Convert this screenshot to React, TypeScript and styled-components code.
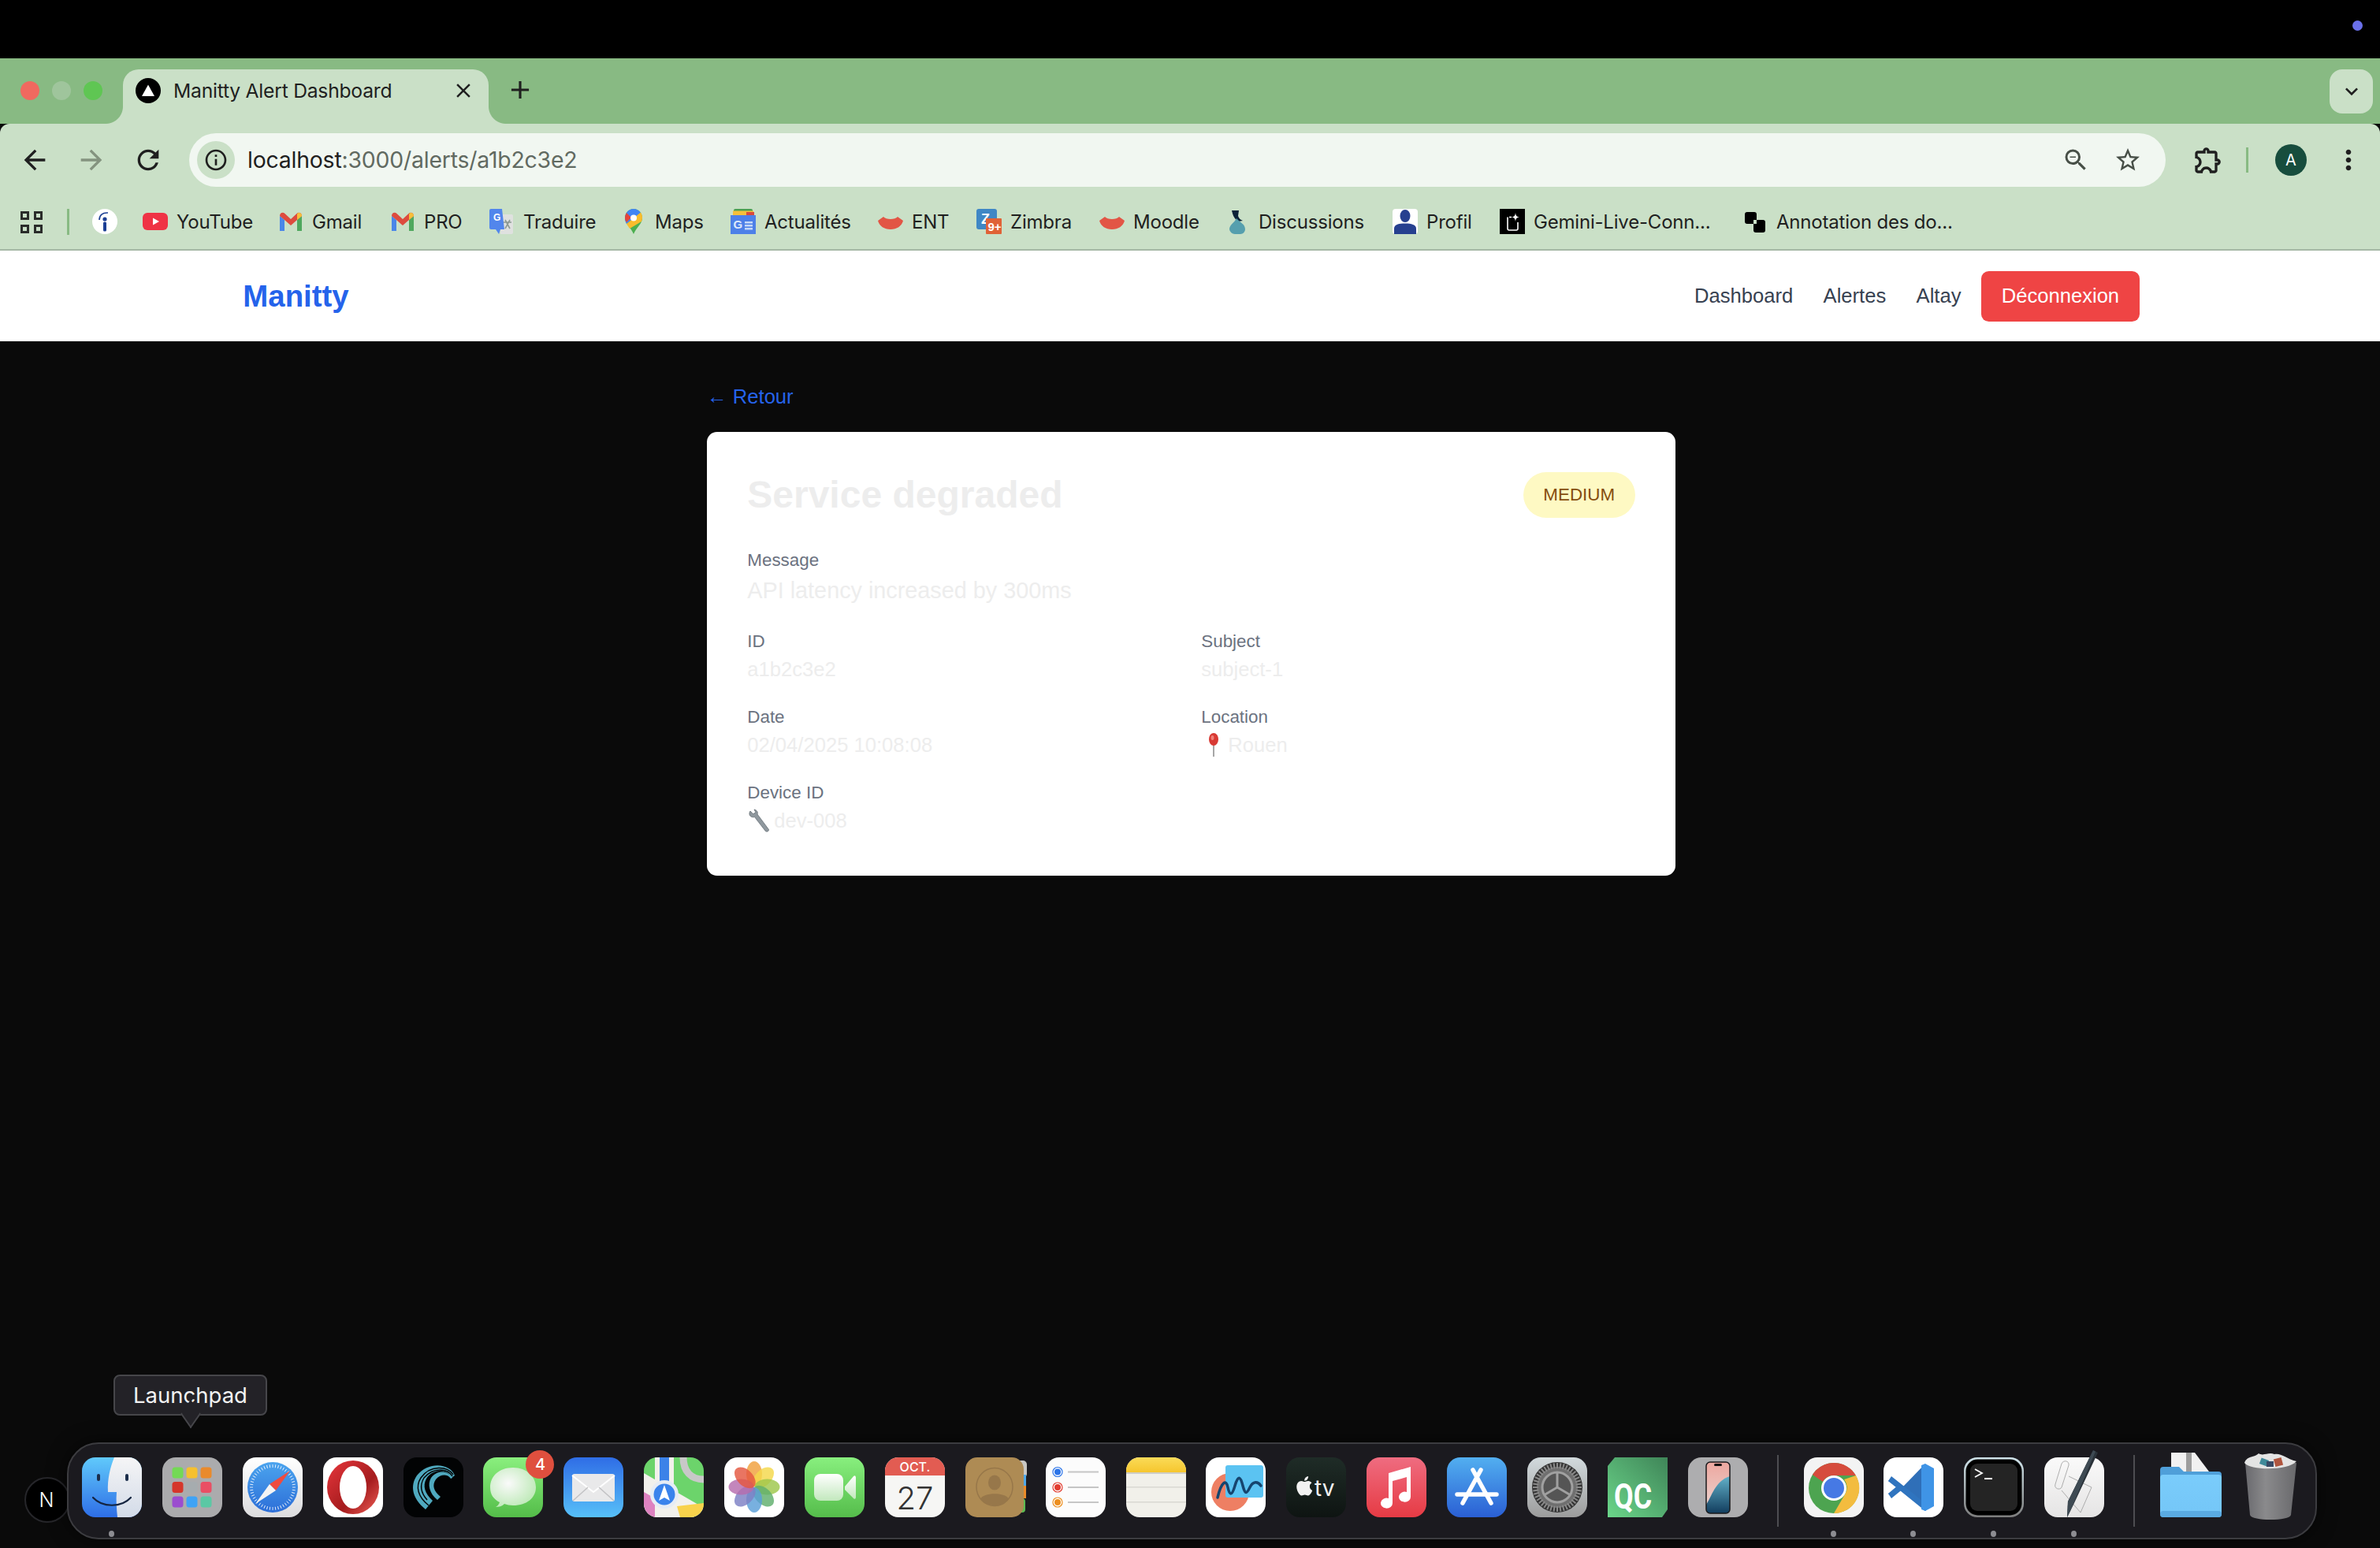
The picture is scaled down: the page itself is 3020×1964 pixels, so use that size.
import React from 'react';
import styled, { createGlobalStyle } from 'styled-components';
import { MdArrowBack, MdArrowForward, MdRefresh, MdInfoOutline, MdOutlineZoomOut, MdStarBorder, MdOutlineExtension, MdMoreVert, MdClose, MdAdd, MdKeyboardArrowDown } from 'react-icons/md';

const GlobalStyle = createGlobalStyle`
  html, body {
    margin: 0;
    padding: 0;
    background: #0a0a0a;
  }
  * { box-sizing: border-box; }
`;

const UI_FONT = `Inter, "Liberation Sans", sans-serif`;

const Screen = styled.div`
  position: relative;
  width: 3020px;
  height: 1964px;
  overflow: hidden;
  background: #0a0a0a;
  font-family: "Liberation Sans", Arial, sans-serif;
`;

const MenuBar = styled.div`
  height: 74px;
  background: #000;
  display: flex;
  justify-content: flex-end;
  align-items: flex-start;
  padding: 26px 22px 0 0;
`;

const RecordingDot = styled.span`
  width: 13px;
  height: 13px;
  border-radius: 50%;
  background: #6a70ea;
`;

const TabStrip = styled.div`
  height: 83px;
  background: #88ba83;
  display: flex;
  align-items: flex-end;
  font-family: ${UI_FONT};
`;

const TrafficLights = styled.div`
  display: flex;
  gap: 16px;
  width: 156px;
  padding: 0 0 30px 26px;
  align-self: flex-end;
`;

const Light = styled.span<{ $color: string }>`
  width: 24px;
  height: 24px;
  border-radius: 50%;
  background: ${p => p.$color};
`;

const Tab = styled.div`
  position: relative;
  width: 464px;
  height: 69px;
  background: #cae0c7;
  border-radius: 20px 20px 0 0;
  display: flex;
  align-items: flex-start;
  padding: 11px 17px 0 16px;
  color: #1f1f1f;
  &::before, &::after {
    content: '';
    position: absolute;
    bottom: 0;
    width: 22px;
    height: 22px;
  }
  &::before {
    left: -22px;
    background: radial-gradient(circle at 0 0, #88ba83 21.5px, #cae0c7 22.5px);
  }
  &::after {
    right: -22px;
    background: radial-gradient(circle at 100% 0, #88ba83 21.5px, #cae0c7 22.5px);
  }
`;

const TabFavicon = styled.span`
  width: 32px;
  height: 32px;
  flex: none;
  margin-right: 16px;
`;

const TabTitle = styled.span`
  flex: 1;
  font-size: 24.7px;
  line-height: 32px;
  letter-spacing: -0.25px;
  white-space: nowrap;
`;

const TabClose = styled.span`
  display: flex;
  align-items: center;
  height: 32px;
  font-size: 30px;
  color: #1f1f1f;
`;

const NewTab = styled.span`
  display: flex;
  margin: 0 0 24px 21px;
  font-size: 38px;
  color: #1f1f1f;
`;

const StripSpacer = styled.div`
  flex: 1;
`;

const TabListButton = styled.span`
  width: 55px;
  height: 56px;
  margin: 0 9px 13px 0;
  background: #cae0c7;
  border-radius: 16px;
  display: flex;
  align-items: center;
  justify-content: center;
  font-size: 32px;
  color: #1f1f1f;
`;

const ChromeBar = styled.div`
  background: #cae0c7;
  border-radius: 12px 12px 0 0;
  border-bottom: 2px solid #a5b8a5;
  height: 161px;
  font-family: ${UI_FONT};
`;

const Toolbar = styled.div`
  height: 92px;
  display: flex;
  align-items: flex-start;
  padding-top: 12px;
`;

const ToolButton = styled.span<{ $dim?: boolean }>`
  width: 72px;
  height: 68px;
  flex: none;
  display: flex;
  align-items: center;
  justify-content: center;
  font-size: 40px;
  color: ${p => (p.$dim ? '#84937f' : '#1f1f1f')};
`;

const NavButtons = styled.div`
  display: flex;
  width: 240px;
  padding-left: 8px;
`;

const AddressBar = styled.div`
  flex: none;
  width: 2508px;
  height: 68px;
  border-radius: 34px;
  background: #f1f7f1;
  display: flex;
  align-items: center;
  padding: 0 30px 1px 10px;
`;

const SiteInfo = styled.span`
  width: 48px;
  height: 48px;
  border-radius: 50%;
  background: #cae0c7;
  color: #1f1f1f;
  display: flex;
  align-items: center;
  justify-content: center;
  font-size: 32px;
  margin-right: 16px;
`;

const UrlHost = styled.span`
  font-size: 28.4px;
  color: #1f1f1f;
  letter-spacing: -0.2px;
`;

const UrlPath = styled(UrlHost)`
  color: #616a61;
`;

const AddressEnd = styled.div`
  margin-left: auto;
  display: flex;
  gap: 30px;
  font-size: 36px;
  color: #474f47;
`;

const ToolbarEnd = styled.div`
  display: flex;
  align-items: center;
  height: 68px;
  padding-left: 34px;
  font-size: 40px;
  color: #1f1f1f;
`;

const ToolbarRule = styled.span`
  width: 3px;
  height: 32px;
  margin: 0 34px 0 28px;
  background: #88ba83;
`;

const Avatar = styled.span`
  width: 40px;
  height: 40px;
  border-radius: 50%;
  background: #174d3d;
  color: #fff;
  font-size: 20px;
  display: flex;
  align-items: center;
  justify-content: center;
  margin-right: 33px;
`;

const BookmarkRow = styled.div`
  height: 67px;
  display: flex;
  align-items: flex-start;
  padding: 16px 0 0 26px;
`;

const AppsGrid = styled.span`
  width: 28px;
  height: 28px;
  flex: none;
  margin: 3px 31px 0 0;
  display: grid;
  grid-template-columns: 1fr 1fr;
  gap: 6px;
`;

const AppsCell = styled.span`
  border: 3px solid #2a2c2a;
`;

const BookmarkRule = styled.span`
  width: 3px;
  height: 33px;
  flex: none;
  background: #88ba83;
  margin-right: 29px;
`;

const AppsBookmark = styled.span`
  width: 32px;
  height: 32px;
  flex: none;
  margin-right: 32px;
`;

const Bookmark = styled.div<{ $width: number }>`
  width: ${p => p.$width}px;
  flex: none;
  display: flex;
  align-items: center;
  gap: 11px;
  height: 32px;
  color: #1f1f1f;
  font-size: 24px;
  letter-spacing: -0.2px;
  white-space: nowrap;
`;

const BookmarkIcon = styled.span`
  width: 32px;
  height: 32px;
  flex: none;
  svg { display: block; }
`;

const SiteNav = styled.nav`
  height: 115px;
  padding-left: 3px;
  background: #fff;
`;

const SiteNavInner = styled.div`
  width: 2457.6px;
  height: 100%;
  margin: 0 auto;
  padding: 0 25.6px;
  display: flex;
  align-items: center;
  justify-content: space-between;
`;

const Logo = styled.span`
  font-size: 38.4px;
  font-weight: 700;
  color: #2563eb;
`;

const NavLinks = styled.div`
  display: flex;
  align-items: center;
  gap: 38.4px;
  font-size: 25.6px;
  color: #374151;
`;

const NavUser = styled.div`
  display: flex;
  align-items: center;
  gap: 25.6px;
`;

const LogoutButton = styled.button`
  height: 64px;
  padding: 0 25.6px;
  border: none;
  border-radius: 9.6px;
  background: #ef4444;
  color: #fff;
  font-family: inherit;
  font-size: 25.6px;
`;

const Page = styled.div`
  padding-left: 3px;
`;

const Main = styled.main`
  width: 1228.8px;
  margin: 0 auto;
  padding-top: 51px;
`;

const BackLink = styled.a`
  display: block;
  font-size: 25.6px;
  line-height: 38.4px;
  margin-bottom: 25.6px;
  color: #2563eb;
`;

const Card = styled.section`
  background: #fff;
  border-radius: 12.8px;
  padding: 51.2px;
`;

const CardHeader = styled.div`
  display: flex;
  justify-content: space-between;
  align-items: center;
  margin-bottom: 38.4px;
`;

const AlertTitle = styled.h1`
  margin: 0;
  font-size: 48px;
  line-height: 57.6px;
  font-weight: 700;
  color: #ededed;
`;

const SeverityBadge = styled.span`
  padding: 12.8px 25.6px;
  border-radius: 999px;
  background: #fef9c3;
  color: #854d0e;
  font-size: 22.4px;
  line-height: 32px;
`;

const FieldLabel = styled.div`
  font-size: 22.4px;
  line-height: 32px;
  color: #6b7280;
`;

const MessageText = styled.div`
  font-size: 28.8px;
  line-height: 44.8px;
  margin-bottom: 25.6px;
  color: #ededed;
`;

const FieldGrid = styled.div`
  display: grid;
  grid-template-columns: 1fr 1fr;
  gap: 25.6px;
`;

const FieldValue = styled.div`
  display: flex;
  align-items: center;
  font-size: 25.6px;
  line-height: 38.4px;
  color: #ededed;
`;

const EmojiMark = styled.span`
  display: flex;
  width: 34px;
  flex: none;
`;

const Dock = styled.div`
  position: absolute;
  left: 85px;
  top: 1830px;
  width: 2855px;
  height: 123px;
  background: #1b1a1f;
  border: 2px solid #3c3c40;
  border-radius: 40px;
  display: flex;
  gap: 25.9px;
  padding: 17px 0 0 17px;
  box-shadow: 0 0 24px rgba(0, 0, 0, 0.6);
`;

const DockSlot = styled.div<{ $width?: number }>`
  position: relative;
  width: ${p => p.$width ?? 76}px;
  height: 76px;
  flex: none;
  svg { display: block; overflow: visible; }
`;

const RunningDot = styled.span`
  position: absolute;
  left: 50%;
  top: 93px;
  width: 7px;
  height: 8px;
  margin-left: -4px;
  border-radius: 50%;
  background: #8d8d92;
`;

const NotificationBadge = styled.span`
  position: absolute;
  right: -14px;
  top: -9px;
  width: 36px;
  height: 36px;
  border-radius: 50%;
  background: #df4f3e;
  color: #fff;
  font: 500 20px ${UI_FONT};
  display: flex;
  align-items: center;
  justify-content: center;
`;

const DockRule = styled.span`
  width: 2px;
  height: 91px;
  margin: -3px 6px 0 11px;
  flex: none;
  background: #4d4d51;
`;

const DevIndicator = styled.div`
  position: absolute;
  left: 31px;
  top: 1874px;
  width: 58px;
  height: 58px;
  border-radius: 50%;
  background: #000;
  border: 2px solid #26262a;
  color: #fff;
  display: flex;
  align-items: center;
  justify-content: center;
  padding-right: 2px;
  font: 300 25px ${UI_FONT};
`;

const DockTooltip = styled.div`
  position: absolute;
  left: 144px;
  top: 1744px;
  width: 195px;
  height: 52px;
  background: #232227;
  border: 2px solid #46464a;
  border-radius: 8px;
  color: #f2f2f2;
  font: 400 27.5px ${UI_FONT};
  display: flex;
  align-items: center;
  justify-content: center;
  &::after {
    content: '';
    position: absolute;
    left: 85px;
    bottom: -11px;
    width: 20px;
    height: 20px;
    background: #232227;
    border-right: 2px solid #46464a;
    border-bottom: 2px solid #46464a;
    transform: rotate(45deg) skew(10deg, 10deg);
  }
`;

/* tab + bookmark favicons */

const NextFavicon = () => (
  <svg viewBox="0 0 32 32" width="32" height="32">
    <circle cx="16" cy="16" r="16" fill="#000" />
    <path d="M16 8.5 24 23H8z" fill="#fff" />
  </svg>
);

const InfoFav = () => (
  <svg viewBox="0 0 32 32" width="32" height="32">
    <circle cx="16" cy="16" r="16" fill="#fff" />
    <circle cx="16" cy="13" r="2.6" fill="#1c3f94" />
    <rect x="14" y="16.5" width="4" height="12" rx="1.5" fill="#1c3f94" />
    <path d="M9 14C9 8 13 4.500 20 5" fill="none" stroke="#1c3f94" strokeWidth="1.6" />
  </svg>
);

const YouTubeFav = () => (
  <svg viewBox="0 0 32 32" width="32" height="32">
    <rect x="0" y="5" width="32" height="22" rx="6" fill="#ef3345" />
    <path d="M13 11.500 21 16 13 20.500z" fill="#fff" />
  </svg>
);

const GmailFav = () => (
  <svg viewBox="0 0 32 32" width="32" height="32">
    <path d="M2 9V28h6V14z" fill="#4a86e8" />
    <path d="M24 14V28h6V9z" fill="#4fa85e" />
    <path d="M2 9C2 5 6 3.500 8.500 6L16 13 23.500 6C26 3.500 30 5 30 9L24 14 16 21 8 14z" fill="#dd4b3e" />
    <path d="M24 6.500C26 3.800 30 5 30 9L24 14z" fill="#f6bf3a" />
  </svg>
);

const TranslateFav = () => (
  <svg viewBox="0 0 32 32" width="32" height="32">
    <path d="M14 7H28a2 2 0 0 1 2 2V30a2 2 0 0 1-2 2H14z" fill="#dfe1df" />
    <path d="M20 14l6 11M26 14l-6 11M18 17h10" stroke="#8d9a94" strokeWidth="1.6" fill="none" />
    <path d="M2 0H16l3 26H14l-2 6-4-6H2a2 2 0 0 1-2-2V2a2 2 0 0 1 2-2z" fill="#5286ec" />
    <text x="5" y="15" fontSize="12" fontWeight="700" fill="#fff" fontFamily="Liberation Sans">G</text>
  </svg>
);

const MapsFav = () => (
  <svg viewBox="0 0 32 32" width="32" height="32">
    <path d="M16 32C13 24 5 19 5 11.500 5 5 10 0 16 0s11 5 11 11.500C27 19 19 24 16 32z" fill="#4caf50" />
    <path d="M7 5A11 11 0 0 1 16 0c4 0 7 2 9 5L7 19C5.800 17 5 14.500 5 11.500 5 9 6 7 7 5z" fill="#4285f4" />
    <path d="M25 4.500A11 11 0 0 1 27 11.500C27 13 26.500 14.500 26 16L11 25 7 19z" fill="#f9bc2d" />
    <path d="M7 5 13 11 7 17C5.500 15 5 13 5 11.500 5 9 6 7 7 5z" fill="#e5443a" />
    <circle cx="16" cy="11.500" r="4" fill="#fff" />
  </svg>
);

const NewsFav = () => (
  <svg viewBox="0 0 32 32" width="32" height="32">
    <rect x="4" y="0" width="24" height="12" rx="2" fill="#4c9f50" />
    <rect x="3" y="2.500" width="26" height="10" fill="#f6bf3a" />
    <rect x="20" y="4" width="10" height="8" fill="#d9493c" />
    <rect x="0" y="8" width="32" height="24" fill="#4d80e8" />
    <text x="3.500" y="25" fontSize="15" fontWeight="700" fill="#dfe9fb" fontFamily="Liberation Sans">G</text>
    <path d="M18 16h10v2.400H18zM18 20h10v2.400H18zM18 24h10v2.400H18z" fill="#c6d8f8" />
  </svg>
);

const MoodleFav = () => (
  <svg viewBox="0 0 32 32" width="32" height="32">
    <path d="M0 15 7 10C10 14 22 14 25 10L32 15C30 22 24 26 16 26 8 26 2 22 0 15z" fill="#e25545" />
  </svg>
);

const ZimbraFav = () => (
  <svg viewBox="0 0 32 32" width="32" height="32">
    <rect x="0" y="0" width="26" height="26" rx="3" fill="#3f87c5" />
    <text x="6" y="19" fontSize="18" fontWeight="700" fill="#fff" fontFamily="Liberation Sans">Z</text>
    <rect x="12" y="12" width="20" height="20" rx="1" fill="#e06236" />
    <text x="14.500" y="28" fontSize="15" fontWeight="700" fill="#fff" fontFamily="Liberation Sans">9+</text>
  </svg>
);

const FlaskFav = () => (
  <svg viewBox="0 0 32 32" width="32" height="32">
    <path d="M9 2h9l-1 7c1 3 3 5 6 6l-6 1c-3-2-6-6-7-10z" fill="#0c2238" />
    <path d="M15 12C20 18 26 19 26 26a6 6 0 0 1-6 6h-7a7 7 0 0 1-7-6c0-6 6-8 9-14z" fill="#569fae" />
  </svg>
);

const ProfilFav = () => (
  <svg viewBox="0 0 32 32" width="32" height="32">
    <rect width="32" height="32" rx="4" fill="#fff" />
    <ellipse cx="16" cy="9" rx="6.500" ry="8" fill="#26408f" />
    <path d="M2 32V25C2 20 8 18.500 16 18.500S30 20 30 25V32z" fill="#26408f" />
  </svg>
);

const GeminiFav = () => (
  <svg viewBox="0 0 32 32" width="32" height="32">
    <rect width="32" height="32" fill="#000" />
    <path d="M10 10.500V25a2 2 0 0 0 2 2h9a2 2 0 0 0 2-2V17M15 10.500h-3" fill="none" stroke="#fff" strokeWidth="1.600" />
    <path d="M20 5c.5 4 1.500 5 5 5.500-3.500.5-4.500 1.500-5 5.500-.5-4-1.500-5-5-5.500 3.500-.5 4.500-1.500 5-5.500z" fill="#fff" />
  </svg>
);

const AnnotationFav = () => (
  <svg viewBox="0 0 32 32" width="32" height="32">
    <rect x="3" y="4" width="15" height="15" rx="3" fill="#000" />
    <rect x="14" y="14" width="15" height="16" rx="3" fill="#000" />
    <rect x="14" y="14" width="4" height="5" fill="#cae0c7" />
  </svg>
);

/* dock icons, 76x76 */

const FinderIcon = () => (
  <svg viewBox="0 0 76 76" width="76" height="76">
    <defs>
      <linearGradient id="fi1" x1="0" y1="0" x2="0" y2="1"><stop offset="0" stopColor="#60c9fb" /><stop offset="1" stopColor="#2e6ee6" /></linearGradient>
      <linearGradient id="fi2" x1="0" y1="0" x2="0" y2="1"><stop offset="0" stopColor="#f5f5f6" /><stop offset="1" stopColor="#d3dbe8" /></linearGradient>
    </defs>
    <rect width="76" height="76" rx="17" fill="url(#fi1)" />
    <path d="M41 0H59A17 17 0 0 1 76 17V59A17 17 0 0 1 59 76H45C44 66 43 54 44 44H33C32 28 36 12 41 0z" fill="url(#fi2)" />
    <rect x="19" y="21" width="4" height="9" rx="2" fill="#1b2d4b" />
    <rect x="55" y="21" width="4" height="9" rx="2" fill="#1b2d4b" />
    <path d="M14 51C26 64 50 64 62 51" fill="none" stroke="#14243f" strokeWidth="2.200" strokeLinecap="round" />
  </svg>
);

const LaunchpadIcon = () => {
  const tiles = ['#74d955', '#f6c02f', '#e98a2c', '#d5362b', '#a6acaf', '#e94f64', '#9b4dcf', '#3fa3f6', '#5bc8a4'];
  return (
    <svg viewBox="0 0 76 76" width="76" height="76">
      <rect width="76" height="76" rx="17" fill="#ababad" />
      {tiles.map((c, i) => (
        <rect key={c} x={12.500 + (i % 3) * 18} y={12.500 + Math.floor(i / 3) * 18.500} width="14" height="14" rx="3.500" fill={c} />
      ))}
    </svg>
  );
};

const SafariIcon = () => {
  const ticks = Array.from({ length: 48 }, (_, i) => i * 7.5);
  return (
    <svg viewBox="0 0 76 76" width="76" height="76">
      <defs>
        <linearGradient id="sa1" x1="0" y1="0" x2="0" y2="1"><stop offset="0" stopColor="#ffffff" /><stop offset="1" stopColor="#dcdcde" /></linearGradient>
        <linearGradient id="sa2" x1="0" y1="0" x2="0" y2="1"><stop offset="0" stopColor="#4ba4ee" /><stop offset="1" stopColor="#2d6fd8" /></linearGradient>
      </defs>
      <rect width="76" height="76" rx="17" fill="url(#sa1)" />
      <circle cx="38" cy="38" r="32" fill="url(#sa2)" />
      {ticks.map(a => (
        <line key={a} x1="38" y1="9" x2="38" y2="13" stroke="#fff" strokeWidth="0.800" transform={`rotate(${a} 38 38)`} />
      ))}
      <path d="M60 17 34 34 42 42z" fill="#ef4b3f" />
      <path d="M16 59 34 34 42 42z" fill="#f4f4f4" />
    </svg>
  );
};

const OperaIcon = () => (
  <svg viewBox="0 0 76 76" width="76" height="76">
    <defs>
      <linearGradient id="op1" x1="0" y1="0" x2="1" y2="1"><stop offset="0" stopColor="#e8363c" /><stop offset="0.600" stopColor="#a51c1e" /><stop offset="1" stopColor="#ef5f57" /></linearGradient>
    </defs>
    <rect width="76" height="76" rx="17" fill="#fff" />
    <ellipse cx="38" cy="38" rx="33" ry="34" fill="url(#op1)" />
    <ellipse cx="38" cy="38" rx="17" ry="27" fill="#fff" />
  </svg>
);

const WaveIcon = () => (
  <svg viewBox="0 0 76 76" width="76" height="76">
    <rect width="76" height="76" rx="17" fill="#020304" />
    <path d="M65 23C60 8 32 4 17 23 8 36 11 52 28 66L37 55C27 46 24 36 29 27 38 14 55 14 61 26z" fill="#4fa9bf" />
    <path d="M47 50C38 43 36 35 41 28 47 21 56 21 60 27L62 26C56 16 42 16 35 26 30 34 33 46 43 54z" fill="#4fa9bf" />
    <g fill="none" stroke="#020304" strokeWidth="1.400">
      <path d="M63 22C56 11 34 9 22 26 15 37 18 50 32 61" />
      <path d="M62 24C56 14 38 12 26 26 20 36 22 45 30 54" />
    </g>
  </svg>
);

const MessagesIcon = () => (
  <svg viewBox="0 0 76 76" width="76" height="76">
    <defs>
      <linearGradient id="ms1" x1="0" y1="0" x2="0" y2="1"><stop offset="0" stopColor="#8aef7e" /><stop offset="1" stopColor="#54bd49" /></linearGradient>
      <radialGradient id="ms2" cx="0.4" cy="0.4" r="0.7"><stop offset="0" stopColor="#fafafa" /><stop offset="1" stopColor="#b9e8b2" /></radialGradient>
    </defs>
    <rect width="76" height="76" rx="17" fill="url(#ms1)" />
    <path d="M38 13C20 13 9 24 9 38c0 9 4 15 12 19-1 3-3 5-5 6 4 0 8-1 11-4 3 1 7 2 11 2 18 0 29-10 29-23S56 13 38 13z" fill="url(#ms2)" />
  </svg>
);

const MailIcon = () => (
  <svg viewBox="0 0 76 76" width="76" height="76">
    <defs>
      <linearGradient id="ml1" x1="0" y1="0" x2="0" y2="1"><stop offset="0" stopColor="#2f6de6" /><stop offset="1" stopColor="#57c0f8" /></linearGradient>
    </defs>
    <rect width="76" height="76" rx="17" fill="url(#ml1)" />
    <rect x="11" y="21" width="54" height="35" rx="3" fill="#e9e9ea" />
    <path d="M11 23 38 44 65 23" fill="none" stroke="#fff" strokeWidth="2" />
    <path d="M12 55 31 38M64 55 45 38" stroke="#c2c2c4" strokeWidth="1.500" />
  </svg>
);

const MapsIcon = () => (
  <svg viewBox="0 0 76 76" width="76" height="76">
    <defs><clipPath id="mp0"><rect width="76" height="76" rx="17" /></clipPath></defs>
    <g clipPath="url(#mp0)">
      <rect width="76" height="76" fill="#6cd46b" />
      <path d="M0 20 76 64V76H0z" fill="#f2f1ec" />
      <path d="M0 44V76H18V54z" fill="#dd82c0" />
      <path d="M42 62 76 58V76H46z" fill="#f8d24c" />
      <rect x="14" y="0" width="24" height="76" fill="#f2f1ec" />
      <rect x="20" y="0" width="12" height="45" fill="#3c82e8" />
      <path d="M50 0C50 18 60 28 76 28" fill="none" stroke="#c8c8c8" strokeWidth="9" />
      <circle cx="26" cy="47" r="18" fill="#e6ecf5" />
      <circle cx="26" cy="47" r="13.500" fill="#3a83ec" />
      <path d="M26 35 33 55 26 51 19 55z" fill="#fff" />
    </g>
  </svg>
);

const PhotosIcon = () => {
  const petals = ['#f0a03c', '#f4d84a', '#9ec74a', '#5fae6d', '#5a9fd8', '#7d80c4', '#b66bad', '#e4573f'];
  return (
    <svg viewBox="0 0 76 76" width="76" height="76">
      <rect width="76" height="76" rx="17" fill="#fff" />
      {petals.map((c, i) => (
        <ellipse key={c} cx="38" cy="21" rx="10" ry="16" fill={c} fillOpacity="0.82" transform={`rotate(${i * 45} 38 37.500)`} />
      ))}
    </svg>
  );
};

const FaceTimeIcon = () => (
  <svg viewBox="0 0 76 76" width="76" height="76">
    <defs>
      <linearGradient id="ft1" x1="0" y1="0" x2="0" y2="1"><stop offset="0" stopColor="#88ef7e" /><stop offset="1" stopColor="#55bd4b" /></linearGradient>
      <linearGradient id="ft2" x1="0" y1="0" x2="0" y2="1"><stop offset="0" stopColor="#ffffff" /><stop offset="1" stopColor="#c2e8bd" /></linearGradient>
    </defs>
    <rect width="76" height="76" rx="17" fill="url(#ft1)" />
    <rect x="12" y="21" width="37" height="34" rx="8" fill="url(#ft2)" />
    <path d="M51 37 62 24C64 22 65 24 65 26V50C65 52 64 54 62 52L51 41z" fill="url(#ft2)" />
  </svg>
);

const CalendarIcon = () => (
  <svg viewBox="0 0 76 76" width="76" height="76">
    <defs><clipPath id="cl0"><rect width="76" height="76" rx="17" /></clipPath></defs>
    <g clipPath="url(#cl0)">
      <rect width="76" height="76" fill="#f6f6f4" />
      <rect width="76" height="23" fill="#e25c52" />
    </g>
    <text x="38" y="18" textAnchor="middle" fontSize="16" fontWeight="500" fill="#fff" fontFamily="Inter">OCT.</text>
    <text x="38" y="66" textAnchor="middle" fontSize="40" fill="#333" fontFamily="Inter" fontWeight="300">27</text>
  </svg>
);

const ContactsIcon = () => (
  <svg viewBox="0 0 78 76" width="78" height="76">
    <rect x="60" y="4" width="18" height="22" rx="5" fill="#c9c7c3" />
    <rect x="68" y="22" width="9" height="14" fill="#4fa8e8" />
    <rect x="68" y="36" width="9" height="16" fill="#ea8c2a" />
    <rect x="66" y="52" width="10" height="18" rx="4" fill="#5cbb52" />
    <rect width="74" height="76" rx="15" fill="#ae8b54" />
    <ellipse cx="37" cy="37.500" rx="23" ry="24" fill="none" stroke="#97774a" strokeWidth="1.500" />
    <ellipse cx="37" cy="32" rx="8" ry="9.500" fill="#97774a" />
    <path d="M19 53C22 44 52 44 55 53 50 59 44 61 37 61S24 59 19 53z" fill="#97774a" />
  </svg>
);

const RemindersIcon = () => (
  <svg viewBox="0 0 76 76" width="76" height="76">
    <rect width="76" height="76" rx="17" fill="#fcfcfc" />
    {[['#2d75e8', 18.500], ['#e23d31', 38], ['#ec8f20', 57]].map(([c, y]) => (
      <g key={c as string}>
        <circle cx="15" cy={y as number} r="6" fill="#fff" stroke={c as string} strokeWidth="1.200" />
        <circle cx="15" cy={y as number} r="4" fill={c as string} />
        <rect x="28" y={(y as number) - 1} width="39" height="2" fill="#c6c6c6" />
      </g>
    ))}
  </svg>
);

const NotesIcon = () => (
  <svg viewBox="0 0 76 76" width="76" height="76">
    <defs>
      <clipPath id="nt0"><rect width="76" height="76" rx="17" /></clipPath>
      <linearGradient id="nt1" x1="0" y1="0" x2="0" y2="1"><stop offset="0" stopColor="#fadb58" /><stop offset="1" stopColor="#f6c62e" /></linearGradient>
    </defs>
    <g clipPath="url(#nt0)">
      <rect width="76" height="76" fill="#f1f0ea" />
      <rect width="76" height="19" fill="url(#nt1)" />
      <rect y="19" width="76" height="2" fill="#cfcdc6" />
      <rect y="37" width="76" height="1.500" fill="#d9d8d2" />
      <rect y="56" width="76" height="1.500" fill="#d9d8d2" />
    </g>
  </svg>
);

const FreeformIcon = () => (
  <svg viewBox="0 0 76 76" width="76" height="76">
    <rect width="76" height="76" rx="17" fill="#fff" />
    <circle cx="31" cy="44" r="24" fill="#ee7f63" />
    <rect x="25" y="10" width="48" height="41" rx="3" fill="#5bc3f2" />
    <path d="M15 51C20 30 26 28 28 38S33 50 37 36 44 24 47 36 52 46 56 38 66 30 70 36" fill="none" stroke="#16456f" strokeWidth="3.500" strokeLinecap="round" />
  </svg>
);

const TvIcon = () => (
  <svg viewBox="0 0 76 76" width="76" height="76">
    <defs>
      <linearGradient id="tv1" x1="0" y1="0" x2="0" y2="1"><stop offset="0" stopColor="#1f2c27" /><stop offset="1" stopColor="#0e1412" /></linearGradient>
    </defs>
    <rect width="76" height="76" rx="17" fill="url(#tv1)" />
    <path transform="translate(11 24) scale(1.020)" fill="#f2f2f2" d="M12.152 6.896c-.948 0-2.415-1.078-3.96-1.04-2.04.027-3.91 1.183-4.961 3.014-2.117 3.675-.546 9.103 1.519 12.09 1.013 1.454 2.208 3.09 3.792 3.039 1.52-.065 2.09-.987 3.935-.987 1.831 0 2.35.987 3.96.948 1.637-.026 2.676-1.48 3.676-2.948 1.156-1.688 1.636-3.325 1.662-3.415-.039-.013-3.182-1.221-3.22-4.857-.026-3.04 2.48-4.494 2.597-4.559-1.429-2.09-3.623-2.324-4.39-2.376-2-.156-3.675 1.09-4.61 1.09zM15.53 3.83c.843-1.012 1.4-2.427 1.245-3.83-1.207.052-2.662.805-3.532 1.818-.78.896-1.454 2.338-1.273 3.714 1.338.104 2.715-.688 3.559-1.701" />
    <text x="36" y="49" fontSize="28" fill="#f2f2f2" fontFamily="Inter" fontWeight="400">tv</text>
  </svg>
);

const MusicIcon = () => (
  <svg viewBox="0 0 76 76" width="76" height="76">
    <defs>
      <linearGradient id="mu1" x1="0" y1="0" x2="0" y2="1"><stop offset="0" stopColor="#ef6c80" /><stop offset="1" stopColor="#e63b44" /></linearGradient>
    </defs>
    <rect width="76" height="76" rx="17" fill="url(#mu1)" />
    <path d="M28 20 56 12V50a7.500 6.500 0 1 1-5-6V25L33 30V58a7.500 6.500 0 1 1-5-6z" fill="#fff" />
  </svg>
);

const AppStoreIcon = () => (
  <svg viewBox="0 0 76 76" width="76" height="76">
    <defs>
      <linearGradient id="as1" x1="0" y1="0" x2="0" y2="1"><stop offset="0" stopColor="#52aff0" /><stop offset="1" stopColor="#2a5fd4" /></linearGradient>
    </defs>
    <rect width="76" height="76" rx="17" fill="url(#as1)" />
    <g stroke="#fff" strokeWidth="5.500" strokeLinecap="round" fill="none">
      <path d="M33 16 56 58" />
      <path d="M43 16 20 58" />
      <path d="M13 47H63" />
    </g>
  </svg>
);

const SettingsIcon = () => {
  const teeth = Array.from({ length: 44 }, (_, i) => i * (360 / 44));
  return (
    <svg viewBox="0 0 76 76" width="76" height="76">
      <defs>
        <linearGradient id="st1" x1="0" y1="0" x2="0" y2="1"><stop offset="0" stopColor="#d2dadd" /><stop offset="1" stopColor="#9c9c9c" /></linearGradient>
      </defs>
      <rect width="76" height="76" rx="17" fill="url(#st1)" />
      <circle cx="38" cy="38" r="32" fill="#333" />
      <circle cx="38" cy="38" r="26" fill="#6f6f6f" />
      {teeth.map(a => (
        <rect key={a} x="37" y="7" width="2" height="7" fill="#8a8a8a" transform={`rotate(${a} 38 38)`} />
      ))}
      <circle cx="38" cy="38" r="20" fill="#555" />
      <g stroke="#a0a0a0" strokeWidth="3">
        <path d="M38 38 38 18M38 38 55 48M38 38 21 48" />
        <circle cx="38" cy="38" r="19" fill="none" />
      </g>
    </svg>
  );
};

const QtIcon = () => (
  <svg viewBox="0 0 76 76" width="76" height="76">
    <defs>
      <linearGradient id="qc1" x1="0" y1="1" x2="1" y2="0"><stop offset="0" stopColor="#6bd68a" /><stop offset="1" stopColor="#3f8558" /></linearGradient>
    </defs>
    <path d="M9 0H76V66L69 76H0V11z" fill="url(#qc1)" />
    <text x="8" y="65" fontSize="45" fontWeight="700" fill="#fff" fontFamily="Roboto" textLength="48" lengthAdjust="spacingAndGlyphs">QC</text>
  </svg>
);

const IphoneIcon = () => (
  <svg viewBox="0 0 76 76" width="76" height="76">
    <defs>
      <clipPath id="ip0"><rect x="23" y="6" width="30" height="65" rx="5" /></clipPath>
      <linearGradient id="ip1" x1="0" y1="0" x2="0" y2="1"><stop offset="0" stopColor="#eda79f" /><stop offset="1" stopColor="#ebd8d4" /></linearGradient>
      <linearGradient id="ip2" x1="0" y1="0" x2="0" y2="1"><stop offset="0" stopColor="#62b1c9" /><stop offset="1" stopColor="#123d5e" /></linearGradient>
    </defs>
    <rect width="76" height="76" rx="17" fill="#adadaf" />
    <g clipPath="url(#ip0)">
      <rect x="23" y="6" width="30" height="65" fill="url(#ip1)" />
      <path d="M23 71V60C30 50 34 30 53 24V71z" fill="url(#ip2)" />
    </g>
    <rect x="23" y="6" width="30" height="65" rx="5" fill="none" stroke="#1a1a1d" strokeWidth="1.500" />
    <rect x="33" y="8" width="10" height="3" rx="1.500" fill="#111" />
  </svg>
);

const ChromeIcon = () => (
  <svg viewBox="0 0 76 76" width="76" height="76">
    <rect width="76" height="76" rx="17" fill="#f3f3f3" />
    <circle cx="38" cy="39" r="32" fill="#4da450" />
    <path d="M38 7A32 32 0 0 1 66 23H38A16 16 0 0 0 24 31L11 22A32 32 0 0 1 38 7z" fill="#d64c3d" />
    <path d="M66 23A32 32 0 0 1 38 71L52 47A16 16 0 0 0 51 28z" fill="#f3bc3f" />
    <circle cx="38" cy="39" r="16" fill="#fff" />
    <circle cx="38" cy="39" r="13" fill="#4679e4" />
  </svg>
);

const VsCodeIcon = () => (
  <svg viewBox="0 0 76 76" width="76" height="76">
    <rect width="76" height="76" rx="17" fill="#fff" />
    <path d="M53 8 24 38 9 27l-3 3 12 8-12 8 3 3 15-11 29 30z" fill="#2f6fb8" />
    <path d="M10 24 58 62 53 68 6 30zM6 46l14-12 6 5-16 13z" fill="#2f74bf" />
    <path d="M48 10 53 8 64 14V62L53 68 48 66z" fill="#3f94e6" />
  </svg>
);

const TerminalIcon = () => (
  <svg viewBox="0 0 76 76" width="76" height="76">
    <defs>
      <linearGradient id="tm1" x1="0" y1="0" x2="0" y2="1"><stop offset="0" stopColor="#cfe3ea" /><stop offset="1" stopColor="#7d7d7d" /></linearGradient>
    </defs>
    <rect width="76" height="76" rx="17" fill="url(#tm1)" />
    <rect x="2.500" y="2.500" width="71" height="71" rx="15" fill="#000" />
    <rect x="8" y="8" width="60" height="60" rx="9" fill="#242424" />
    <path d="M14 15 23 20 14 25" fill="none" stroke="#fff" strokeWidth="1.800" />
    <rect x="26" y="26" width="10" height="2" fill="#fff" />
  </svg>
);

const ScriptEditorIcon = () => (
  <svg viewBox="0 0 76 76" width="76" height="76">
    <defs>
      <linearGradient id="se1" x1="0" y1="0" x2="0" y2="1"><stop offset="0" stopColor="#fafafa" /><stop offset="1" stopColor="#e5e4e4" /></linearGradient>
    </defs>
    <rect width="76" height="76" rx="17" fill="url(#se1)" />
    <path d="M22 8 14 34C12 40 20 42 22 38L31 10C32 4 24 3 22 8zM31 24 60 38 46 70 22 42" fill="none" stroke="#a5a5a5" strokeWidth="0.900" />
    <path d="M62 -9 68 -6 37 60 29 76 30 56z" fill="#2a3239" />
    <path d="M62 -9 65 -7.500 33 68 29 76 30 56z" fill="#3e4a53" />
  </svg>
);

const ArchiveFolderIcon = () => (
  <svg viewBox="0 0 78 82" width="78" height="82" style={{ marginTop: -6 }}>
    <defs>
      <linearGradient id="fo1" x1="0" y1="0" x2="0" y2="1"><stop offset="0" stopColor="#7accfb" /><stop offset="1" stopColor="#74c6f7" /></linearGradient>
    </defs>
    <path d="M14 0H44L62 24H14z" fill="#f1f1f1" />
    <rect x="33" y="0" width="7" height="28" fill="#9d9d9d" />
    <path d="M4 18H24L30 24H74a4 4 0 0 1 4 4V78a4 4 0 0 1-4 4H4a4 4 0 0 1-4-4V22a4 4 0 0 1 4-4z" fill="#4f9fd9" />
    <rect x="0" y="28" width="78" height="52" rx="4" fill="url(#fo1)" />
    <rect x="0" y="74" width="78" height="8" rx="4" fill="#5aabe2" />
  </svg>
);

const TrashIcon = () => (
  <svg viewBox="0 0 66 86" width="66" height="86" style={{ marginTop: -7, marginLeft: 3 }}>
    <defs>
      <linearGradient id="tr1" x1="0" y1="0" x2="1" y2="0"><stop offset="0" stopColor="#6a6a6e" /><stop offset="0.400" stopColor="#8a8a8c" /><stop offset="1" stopColor="#69696c" /></linearGradient>
    </defs>
    <path d="M1 14 66 14 59 80C58 84 46 86 33 86S8 84 7 80z" fill="url(#tr1)" />
    <path d="M0 14C4 4 12 8 18 2 24 6 30 0 38 3 46 1 52 8 66 12 56 24 8 24 0 14z" fill="#e4e4e4" />
    <rect x="20" y="9" width="10" height="8" fill="#3f8a9a" transform="rotate(20 25 13)" />
    <rect x="38" y="8" width="10" height="10" fill="#b0553e" transform="rotate(-15 43 13)" />
    <rect x="28" y="12" width="9" height="7" fill="#394a66" />
  </svg>
);

type BookmarkItem = { label: string; width: number; icon: React.ReactNode };

const bookmarks: BookmarkItem[] = [
  { label: 'YouTube', width: 172, icon: <YouTubeFav /> },
  { label: 'Gmail', width: 142, icon: <GmailFav /> },
  { label: 'PRO', width: 126, icon: <GmailFav /> },
  { label: 'Traduire', width: 167, icon: <TranslateFav /> },
  { label: 'Maps', width: 139, icon: <MapsFav /> },
  { label: 'Actualités', width: 187, icon: <NewsFav /> },
  { label: 'ENT', width: 125, icon: <MoodleFav /> },
  { label: 'Zimbra', width: 156, icon: <ZimbraFav /> },
  { label: 'Moodle', width: 159, icon: <MoodleFav /> },
  { label: 'Discussions', width: 213, icon: <FlaskFav /> },
  { label: 'Profil', width: 136, icon: <ProfilFav /> },
  { label: 'Gemini-Live-Conn...', width: 308, icon: <GeminiFav /> },
  { label: 'Annotation des do...', width: 300, icon: <AnnotationFav /> },
];

type DockApp = { name: string; icon: React.ReactNode; running?: boolean; badge?: string; width?: number };

const appsBefore: DockApp[] = [
  { name: 'Finder', icon: <FinderIcon />, running: true },
  { name: 'Launchpad', icon: <LaunchpadIcon /> },
  { name: 'Safari', icon: <SafariIcon /> },
  { name: 'Opera', icon: <OperaIcon /> },
  { name: 'Wave', icon: <WaveIcon /> },
  { name: 'Messages', icon: <MessagesIcon />, badge: '4' },
  { name: 'Mail', icon: <MailIcon /> },
  { name: 'Maps', icon: <MapsIcon /> },
  { name: 'Photos', icon: <PhotosIcon /> },
  { name: 'FaceTime', icon: <FaceTimeIcon /> },
  { name: 'Calendar', icon: <CalendarIcon /> },
  { name: 'Contacts', icon: <ContactsIcon /> },
  { name: 'Reminders', icon: <RemindersIcon /> },
  { name: 'Notes', icon: <NotesIcon /> },
  { name: 'Freeform', icon: <FreeformIcon /> },
  { name: 'TV', icon: <TvIcon /> },
  { name: 'Music', icon: <MusicIcon /> },
  { name: 'App Store', icon: <AppStoreIcon /> },
  { name: 'Settings', icon: <SettingsIcon /> },
  { name: 'Qt Creator', icon: <QtIcon /> },
  { name: 'iPhone', icon: <IphoneIcon /> },
];

const appsRunning: DockApp[] = [
  { name: 'Chrome', icon: <ChromeIcon />, running: true },
  { name: 'VS Code', icon: <VsCodeIcon />, running: true },
  { name: 'Terminal', icon: <TerminalIcon />, running: true },
  { name: 'Script Editor', icon: <ScriptEditorIcon />, running: true },
];

const appsAfter: DockApp[] = [
  { name: 'Archive', icon: <ArchiveFolderIcon />, width: 78 },
  { name: 'Trash', icon: <TrashIcon />, width: 72 },
];

const renderDockApp = (app: DockApp) => (
  <DockSlot key={app.name} $width={app.width} title={app.name}>
    {app.icon}
    {app.badge && <NotificationBadge>{app.badge}</NotificationBadge>}
    {app.running && <RunningDot />}
  </DockSlot>
);

const PinEmoji = () => (
  <svg viewBox="0 0 32 32" width="32" height="32">
    <path d="M16 14V31" stroke="#8a8a8a" strokeWidth="1.500" />
    <ellipse cx="16" cy="9" rx="6" ry="8" fill="#d83a34" />
    <ellipse cx="14.500" cy="7" rx="2" ry="3" fill="#f08078" />
  </svg>
);

const WrenchEmoji = () => (
  <svg viewBox="0 0 32 32" width="32" height="32">
    <path d="M4 4C2 7 3 10 5 11 7 12 8 12 9.500 11.500L23 29C24 31 28 30 27.500 27.500L13 8C14 6 13 3 9 2L11 6 7.500 7.500z" fill="#8f989e" stroke="#666f75" strokeWidth="0.800" />
  </svg>
);

export default function App() {
  return (
    <Screen>
      <GlobalStyle />
      <MenuBar>
        <RecordingDot />
      </MenuBar>
      <TabStrip>
        <TrafficLights>
          <Light $color="#f0695f" />
          <Light $color="#9fc59c" />
          <Light $color="#5fc653" />
        </TrafficLights>
        <Tab>
          <TabFavicon><NextFavicon /></TabFavicon>
          <TabTitle>Manitty Alert Dashboard</TabTitle>
          <TabClose><MdClose /></TabClose>
        </Tab>
        <NewTab><MdAdd /></NewTab>
        <StripSpacer />
        <TabListButton><MdKeyboardArrowDown /></TabListButton>
      </TabStrip>
      <ChromeBar>
        <Toolbar>
          <NavButtons>
            <ToolButton><MdArrowBack /></ToolButton>
            <ToolButton $dim><MdArrowForward /></ToolButton>
            <ToolButton><MdRefresh /></ToolButton>
          </NavButtons>
          <AddressBar>
            <SiteInfo><MdInfoOutline /></SiteInfo>
            <UrlHost>localhost</UrlHost>
            <UrlPath>:3000/alerts/a1b2c3e2</UrlPath>
            <AddressEnd>
              <MdOutlineZoomOut />
              <MdStarBorder />
            </AddressEnd>
          </AddressBar>
          <ToolbarEnd>
            <MdOutlineExtension />
            <ToolbarRule />
            <Avatar>A</Avatar>
            <MdMoreVert />
          </ToolbarEnd>
        </Toolbar>
        <BookmarkRow>
          <AppsGrid>
            <AppsCell /><AppsCell /><AppsCell /><AppsCell />
          </AppsGrid>
          <BookmarkRule />
          <AppsBookmark><InfoFav /></AppsBookmark>
          {bookmarks.map(b => (
            <Bookmark key={b.label} $width={b.width}>
              <BookmarkIcon>{b.icon}</BookmarkIcon>
              <span>{b.label}</span>
            </Bookmark>
          ))}
        </BookmarkRow>
      </ChromeBar>
      <SiteNav>
        <SiteNavInner>
          <Logo>Manitty</Logo>
          <NavUser>
            <NavLinks>
              <span>Dashboard</span>
              <span>Alertes</span>
              <span>Altay</span>
            </NavLinks>
            <LogoutButton>Déconnexion</LogoutButton>
          </NavUser>
        </SiteNavInner>
      </SiteNav>
      <Page>
        <Main>
          <BackLink>← Retour</BackLink>
          <Card>
            <CardHeader>
              <AlertTitle>Service degraded</AlertTitle>
              <SeverityBadge>MEDIUM</SeverityBadge>
            </CardHeader>
            <FieldLabel>Message</FieldLabel>
            <MessageText>API latency increased by 300ms</MessageText>
            <FieldGrid>
              <div>
                <FieldLabel>ID</FieldLabel>
                <FieldValue>a1b2c3e2</FieldValue>
              </div>
              <div>
                <FieldLabel>Subject</FieldLabel>
                <FieldValue>subject-1</FieldValue>
              </div>
              <div>
                <FieldLabel>Date</FieldLabel>
                <FieldValue>02/04/2025 10:08:08</FieldValue>
              </div>
              <div>
                <FieldLabel>Location</FieldLabel>
                <FieldValue><EmojiMark><PinEmoji /></EmojiMark>Rouen</FieldValue>
              </div>
              <div>
                <FieldLabel>Device ID</FieldLabel>
                <FieldValue><EmojiMark><WrenchEmoji /></EmojiMark>dev-008</FieldValue>
              </div>
            </FieldGrid>
          </Card>
        </Main>
      </Page>
      <DevIndicator>N</DevIndicator>
      <Dock>
        {appsBefore.map(renderDockApp)}
        <DockRule />
        {appsRunning.map(renderDockApp)}
        <DockRule />
        {appsAfter.map(renderDockApp)}
      </Dock>
      <DockTooltip>Launchpad</DockTooltip>
    </Screen>
  );
}
